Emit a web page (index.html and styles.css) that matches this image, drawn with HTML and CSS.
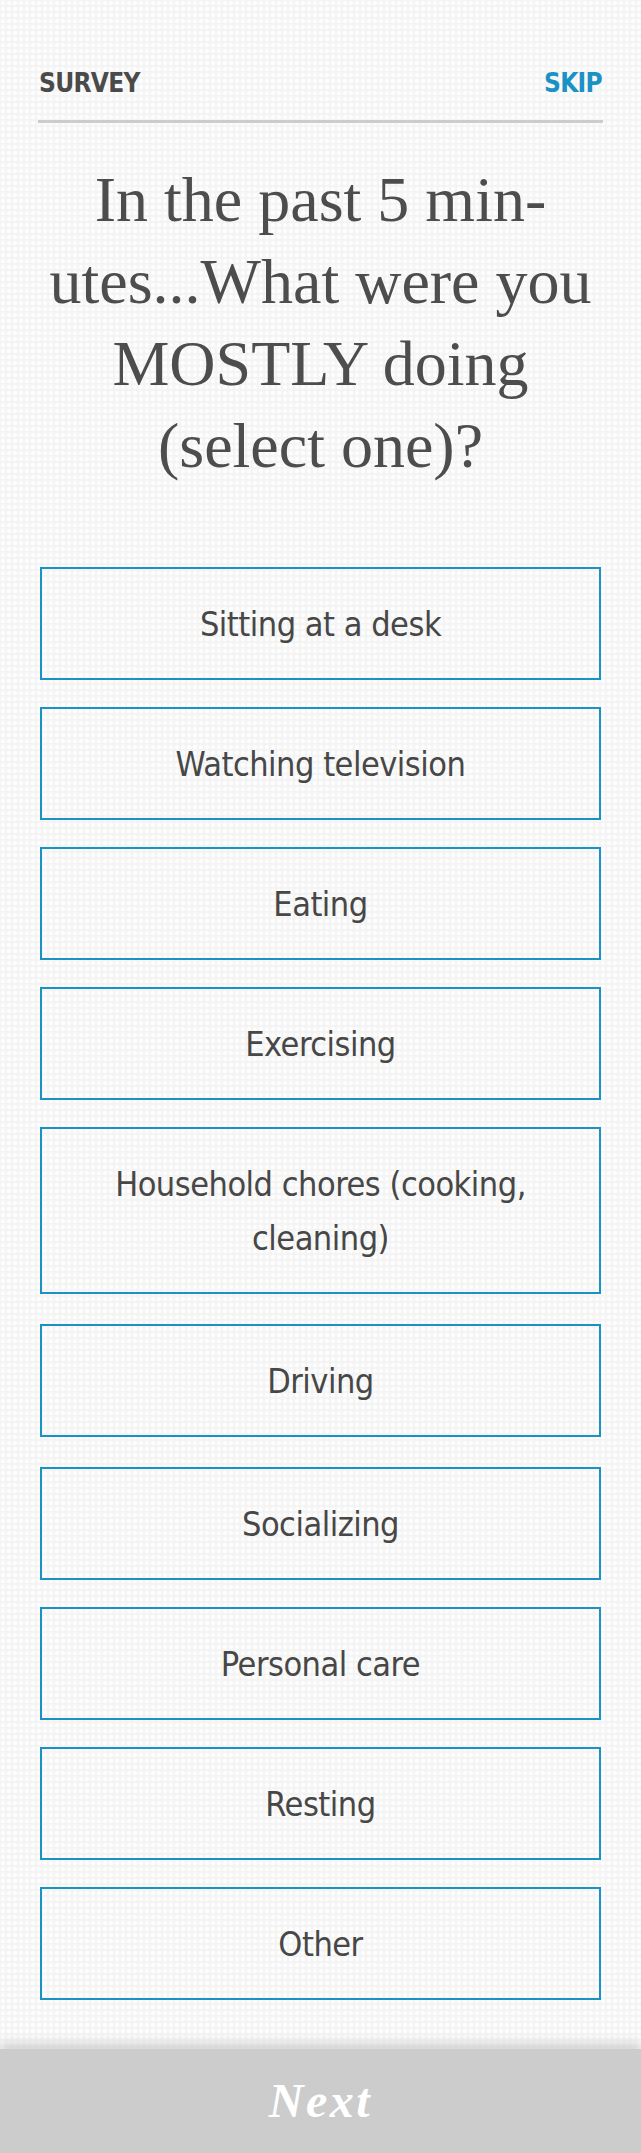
FILE: index.html
```html
<!DOCTYPE html>
<html lang="en">
<head>
<meta charset="utf-8">
<title>Survey</title>
<link rel="stylesheet" href="styles.css">
</head>
<body>
<div class="page">
  <header class="topbar">
    <span class="label">SURVEY</span>
    <a class="skip" href="#">SKIP</a>
  </header>
  <h1 class="question">In the past 5 min-<br>utes...What were you<br>MOSTLY doing<br>(select one)?</h1>
  <div class="options">
    <button class="option">Sitting at a desk</button>
    <button class="option">Watching television</button>
    <button class="option">Eating</button>
    <button class="option">Exercising</button>
    <button class="option option--spaced">Household chores (cooking, cleaning)</button>
    <button class="option option--spaced">Driving</button>
    <button class="option">Socializing</button>
    <button class="option">Personal care</button>
    <button class="option">Resting</button>
    <button class="option">Other</button>
  </div>
</div>
<footer class="footer">
  <span class="next">Next</span>
</footer>
</body>
</html>
```

FILE: styles.css
```css
html, body {
  margin: 0;
  padding: 0;
}
body {
  background-color: #f4f4f4;
  background-image: radial-gradient(circle at center, #fdfdfd 1.8px, transparent 2.6px);
  background-size: 6px 6px;
  width: 641px;
  min-height: 2153px;
  display: flex;
  flex-direction: column;
}
.page {
  padding: 68px 40px 0 40px;
  flex: 1;
}
.topbar {
  display: flex;
  justify-content: space-between;
  align-items: baseline;
  margin: 0 -2px;
  padding: 0 1px 22px 1px;
  border-bottom: 3px solid #cccccc;
  font-family: "DejaVu Sans Condensed", "DejaVu Sans", sans-serif;
  font-weight: bold;
  font-size: 26px;
  line-height: 30px;
  letter-spacing: -0.7px;
}
.label {
  color: #4a4a4a;
}
.skip {
  color: #1a93c4;
  text-decoration: none;
}
.question {
  margin: 36px 0 0 0;
  text-align: center;
  font-family: "Liberation Serif", "Times New Roman", serif;
  font-weight: normal;
  font-size: 64px;
  line-height: 82px;
  color: #4d4d4d;
}
.options {
  margin-top: 80px;
  display: flex;
  flex-direction: column;
  gap: 27px;
}
.option {
  display: block;
  width: 100%;
  margin: 0;
  padding: 28px 60px 27px;
  background: transparent;
  border: 2px solid #1a93c4;
  border-radius: 0;
  font-family: "DejaVu Sans Condensed", "DejaVu Sans", sans-serif;
  font-size: 34px;
  line-height: 54px;
  letter-spacing: -0.5px;
  color: #474747;
  text-align: center;
}
.option--spaced {
  margin-bottom: 3px;
}
.footer {
  margin-top: 48px;
  height: 104px;
  background: #cccccc;
  box-shadow: 0 -6px 10px rgba(204, 204, 204, 0.85);
  display: flex;
  align-items: center;
  justify-content: center;
}
.next {
  font-family: "Liberation Serif", "Times New Roman", serif;
  font-weight: bold;
  font-style: italic;
  font-size: 48px;
  letter-spacing: 2.5px;
  color: #ffffff;
  line-height: 1;
}
```
